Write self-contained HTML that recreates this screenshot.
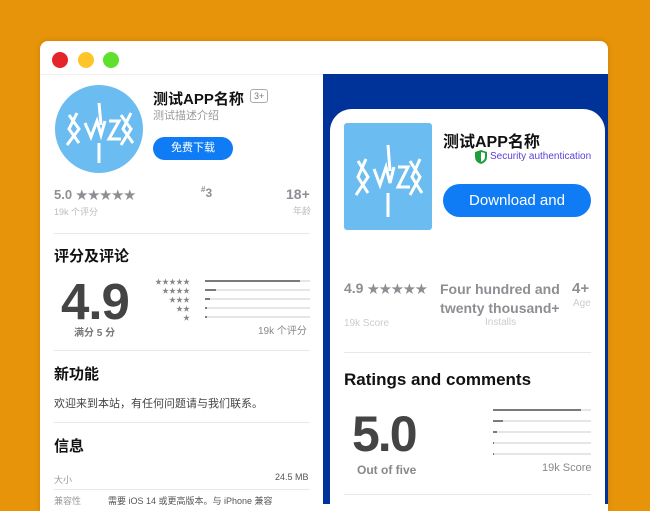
<!DOCTYPE html>
<html><head><meta charset="utf-8"><style>
*{margin:0;padding:0;box-sizing:border-box}
body{width:650px;height:500px;background:#e8940a;position:relative;overflow:hidden;font-family:"Liberation Sans","Noto Sans CJK SC",sans-serif}
.a{position:absolute;white-space:nowrap}
svg.a{display:block}
.win{position:absolute;left:40px;top:41px;width:568px;height:470px;background:#fff;border-radius:8px 8px 0 0;box-shadow:0 0 6px rgba(0,0,0,.15)}
.dot{position:absolute;top:52px;width:16px;height:16px;border-radius:50%}
.g{color:#8e8e93}
.hr{position:absolute;height:1px;background:#e8e8e8}
.bar{position:absolute;height:2px;background:#e6e6e6}
.bar i{display:block;height:2px;background:#7a7a7a}
</style></head><body>
<div class="win"></div>
<div class="dot" style="left:52px;background:#e5252a"></div>
<div class="dot" style="left:78px;background:#fdc52a"></div>
<div class="dot" style="left:103px;background:#5fe02c"></div>
<div style="position:absolute;left:40px;top:74px;width:568px;height:1px;background:#f0f0f0"></div>

<!-- left -->
<svg class="a" style="left:55px;top:85px" width="88" height="88" viewBox="0 0 88 88"><circle cx="44" cy="44" r="44" fill="#6bbcf0"/><g fill="none" stroke="#fff" stroke-width="3" stroke-linejoin="miter"><path d="M14 30 L24 44 L12 60 M22 28 L14 44 L24 58"/><path d="M30 38 L36 52 L42 36 L46 50 L50 36"/><path d="M44 18 L46 40 M44 78 L44 58"/><path d="M54 36 L64 36 L54 54 L66 54"/><path d="M66 30 L76 44 L66 60 M76 28 L68 44 L78 58"/></g></svg>
<div class="a" style="left:153px;top:88px;font-size:15px;font-weight:bold;color:#111">测试APP名称</div>
<div class="a" style="left:250px;top:89px;font-size:9px;color:#777;border:1px solid #aaa;border-radius:3px;padding:0 3px;line-height:12px">3+</div>
<div class="a" style="left:153px;top:107px;font-size:11px;color:#999">测试描述介绍</div>
<div class="a" style="left:153px;top:137px;width:80px;height:23px;border-radius:12px;background:#0f7cf5;color:#fff;font-size:11px;text-align:center;line-height:23px">免费下载</div>
<div class="a g" style="left:54px;top:186px;font-size:13px;font-weight:bold">5.0 <span style="font-size:12px">★★★★★</span></div>
<div class="a" style="left:54px;top:205px;font-size:9px;color:#bbb">19k 个评分</div>
<div class="a g" style="left:201px;top:185px;font-size:12px;font-weight:bold"><sup style="font-size:8px">#</sup>3</div>
<div class="a g" style="left:286px;top:186px;font-size:14px;font-weight:bold">18+</div>
<div class="a" style="left:293px;top:204px;font-size:9px;color:#bbb">年龄</div>
<div class="hr" style="left:54px;top:233px;width:256px"></div>
<div class="a" style="left:54px;top:245px;font-size:15px;font-weight:bold;color:#111">评分及评论</div>
<div class="a" style="left:61px;top:274px;font-size:51px;font-weight:bold;color:#444;letter-spacing:-1px;line-height:56px">4.9</div>
<div class="a" style="left:74px;top:324px;font-size:10px;color:#777;font-weight:bold">满分 5 分</div>
<div class="a" style="left:150px;top:278px;width:40px;text-align:right;font-size:7px;color:#888;line-height:9px">★★★★★<br>★★★★<br>★★★<br>★★<br>★</div>
<div class="bar" style="left:205px;top:280px;width:105px"><i style="width:95px"></i></div>
<div class="bar" style="left:205px;top:289px;width:105px"><i style="width:11px"></i></div>
<div class="bar" style="left:205px;top:298px;width:105px"><i style="width:5px"></i></div>
<div class="bar" style="left:205px;top:307px;width:105px"><i style="width:2px"></i></div>
<div class="bar" style="left:205px;top:316px;width:105px"><i style="width:2px"></i></div>
<div class="a" style="left:258px;top:322px;font-size:10px;color:#888">19k 个评分</div>
<div class="hr" style="left:54px;top:350px;width:256px"></div>
<div class="a" style="left:54px;top:363px;font-size:15px;font-weight:bold;color:#111">新功能</div>
<div class="a" style="left:54px;top:395px;font-size:11px;color:#444">欢迎来到本站，有任何问题请与我们联系。</div>
<div class="hr" style="left:54px;top:422px;width:256px"></div>
<div class="a" style="left:54px;top:435px;font-size:15px;font-weight:bold;color:#111">信息</div>
<div class="a" style="left:54px;top:473px;font-size:9px;color:#999">大小</div>
<div class="a" style="left:275px;top:472px;font-size:9px;color:#555">24.5 MB</div>
<div class="hr" style="left:54px;top:489px;width:256px"></div>
<div class="a" style="left:54px;top:494px;font-size:9px;color:#999">兼容性</div>
<div class="a" style="left:108px;top:494px;font-size:9px;color:#555">需要 iOS 14 或更高版本。与 iPhone 兼容</div>

<!-- right -->
<div class="a" style="left:323px;top:74px;width:285px;height:430px;background:#003399"></div>
<div class="a" style="left:330px;top:109px;width:275px;height:400px;background:#fff;border-radius:22px 22px 0 0"></div>
<svg class="a" style="left:344px;top:123px" width="88" height="107" viewBox="0 0 88 107"><rect width="88" height="107" rx="3" fill="#6bbcf0"/><g fill="none" stroke="#fff" stroke-width="3"><path d="M14 38 L24 54 L12 72 M22 36 L14 54 L24 70"/><path d="M30 46 L36 62 L42 44 L46 60 L50 44"/><path d="M44 22 L46 48 M44 94 L44 70"/><path d="M54 44 L64 44 L54 64 L66 64"/><path d="M66 38 L76 54 L66 72 M76 36 L68 54 L78 70"/></g></svg>
<div class="a" style="left:443px;top:128px;font-size:16px;font-weight:bold;color:#111">测试APP名称</div>
<svg class="a" style="left:475px;top:150px" width="12" height="14" viewBox="0 0 12 14"><path d="M6 0 L12 2 L12 7 Q12 12 6 14 Q0 12 0 7 L0 2Z" fill="#1f9d3a"/><path d="M6 2 L6 12 Q10 10 10 7 L10 3Z" fill="#fff"/></svg>
<div class="a" style="left:490px;top:151px;font-size:10px;color:#5b3fd6">Security authentication</div>
<div class="a" style="left:443px;top:184px;width:148px;height:33px;border-radius:17px;background:#0f7cf5;color:#fff;font-size:15px;text-align:center;line-height:33px">Download and</div>
<div class="a g" style="left:344px;top:280px;font-size:14px;font-weight:bold">4.9 <span style="font-size:12px">★★★★★</span></div>
<div class="a" style="left:344px;top:318px;font-size:10px;color:#ccc">19k Score</div>
<div class="a g" style="left:440px;top:280px;font-size:14px;font-weight:bold;text-align:center;line-height:19px">Four hundred and<br>twenty thousand+</div>
<div class="a" style="left:485px;top:317px;font-size:10px;color:#ccc">Installs</div>
<div class="a g" style="left:572px;top:280px;font-size:15px;font-weight:bold">4+</div>
<div class="a" style="left:573px;top:298px;font-size:10px;color:#ccc">Age</div>
<div class="hr" style="left:344px;top:352px;width:247px"></div>
<div class="a" style="left:344px;top:370px;font-size:17px;font-weight:bold;color:#111">Ratings and comments</div>
<div class="a" style="left:352px;top:406px;font-size:50px;font-weight:bold;color:#444;line-height:56px;letter-spacing:-2px">5.0</div>
<div class="a" style="left:357px;top:463px;font-size:12px;color:#888;font-weight:bold">Out of five</div>
<div class="bar" style="left:493px;top:409px;width:98px"><i style="width:88px"></i></div>
<div class="bar" style="left:493px;top:420px;width:98px"><i style="width:10px"></i></div>
<div class="bar" style="left:493px;top:431px;width:98px"><i style="width:4px"></i></div>
<div class="bar" style="left:493px;top:442px;width:98px"><i style="width:1px"></i></div>
<div class="bar" style="left:493px;top:453px;width:98px"><i style="width:1px"></i></div>
<div class="a" style="left:542px;top:462px;font-size:11px;color:#888">19k Score</div>
<div class="hr" style="left:344px;top:494px;width:247px"></div>
</body></html>
